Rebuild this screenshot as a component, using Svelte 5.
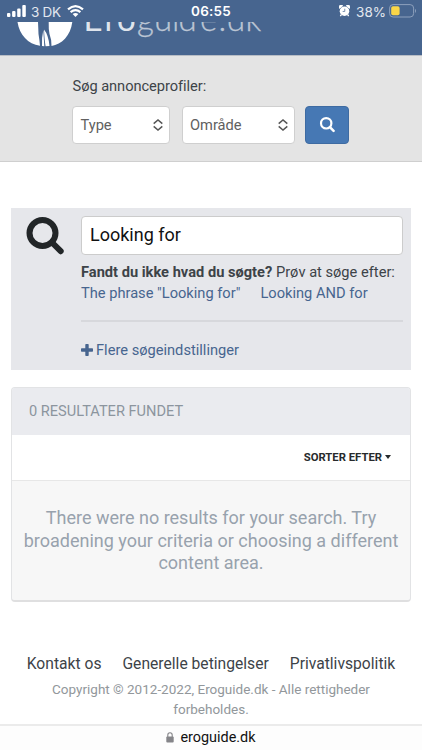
<script>
  const filters = [
    { label: 'Type', width: 98 },
    { label: 'Område', width: 113 }
  ];
  const footerLinks = ['Kontakt os', 'Generelle betingelser', 'Privatlivspolitik'];
</script>

<div class="page">
  <div class="status">
    <div class="left">
      <svg width="20" height="12" viewBox="0 0 20 12" fill="#fff">
        <rect x="0" y="8" width="3.4" height="4" rx="1" />
        <rect x="5.1" y="6" width="3.4" height="6" rx="1" />
        <rect x="10.2" y="3.5" width="3.4" height="8.5" rx="1" />
        <rect x="15.3" y="0" width="3.5" height="12" rx="1" />
      </svg>
      <span class="carrier">3 DK</span>
      <svg width="17" height="12" viewBox="0 0 17 12">
        <path d="M1 4.4Q8.5-2.1 16 4.4M3.6 7.2q4.9-4.1 9.8 0" fill="none" stroke="#fff" stroke-width="2.2" />
        <path d="M5.6 9.1q2.9-2.3 5.8 0L8.5 12z" fill="#fff" />
      </svg>
    </div>
    <span class="time">06:55</span>
    <div class="right">
      <svg width="11" height="12" viewBox="0 0 12 13">
        <path d="M0.5 3.6A2.2 2.2 0 0 1 4 .8zM11.500 3.600A2.200 2.200 0 0 0 8 .8z" fill="#fff" stroke="#fff" />
        <path d="M2.500 10.500l-1 1.500M9.500 10.500l1 1.500" stroke="#fff" stroke-width="1.500" />
        <circle cx="6" cy="6.700" r="5.200" fill="#fff" />
        <path d="M6.300 4v3H4" fill="none" stroke="#6f87a9" stroke-width="1" />
      </svg>
      <span class="percent">38%</span>
      <svg width="28" height="14" viewBox="0 0 28 14">
        <rect x=".6" y=".6" width="24" height="12.400" rx="3.500" fill="none" stroke="#8ea1bd" />
        <rect x="2.200" y="2.300" width="8.400" height="9" rx="1.800" fill="#fad648" />
        <path d="M26 4.700q2 2.100 0 4.200z" fill="#8ea1bd" />
      </svg>
    </div>
  </div>

  <header>
    <svg width="280" height="33" viewBox="0 22 280 33">
      <path d="M17.500 22H38Q38.300 28 38.500 34Q39.500 40 40 45.800C28 44 19.500 35 17.500 22z" fill="#fff" />
      <path d="M48.700 22H72.300C70.500 36 61.500 44.500 51.500 46Q51.500 39 49.500 34Q48.500 29 48.700 22z" fill="#fff" />
      <path d="M43.300 30Q41.500 38 42 46L44.300 46.300zM44 29.500Q44.500 40 45.600 46.300L49.500 46Q48.500 35 44 29.500z" fill="#fff" />
      <text x="83.500 104.500 117 137 154 172 178.500 200 218.500 227 245.500" y="31" class="logo">Ero<tspan class="thin">guide.dk</tspan></text>
    </svg>
  </header>

  <section class="finder">
    <div class="finder-label">Søg annonceprofiler:</div>
    <div class="controls">
      {#each filters as f}
        <div class="select" style="width: {f.width}px">
          <span>{f.label}</span>
          <svg width="10" height="12" viewBox="0 0 10 12" fill="none" stroke="#555" stroke-width="1.500">
            <path d="M.7 4.600L5 1l4.300 3.600M.7 7.400L5 11l4.300-3.600" />
          </svg>
        </div>
      {/each}
      <button aria-label="Søg">
        <svg width="16" height="16" viewBox="0 0 16 16" fill="none" stroke="#fff" stroke-width="2.200">
          <circle cx="7.200" cy="6.300" r="5.200" />
          <path d="M10.900 10.100l3.700 3.700" stroke-width="2.500" stroke-linecap="round" />
        </svg>
      </button>
    </div>
  </section>

  <section class="search">
    <svg width="40" height="40" viewBox="0 0 40 40" fill="none" stroke="#222628">
      <circle cx="17.500" cy="17" r="13" stroke-width="6" />
      <path d="M27 26.500l8.700 8.700" stroke-width="6" stroke-linecap="round" />
    </svg>
    <div class="fields">
      <div class="query">Looking for</div>
      <div class="hint"><b>Fandt du ikke hvad du søgte?</b> <span>Prøv at søge efter:</span></div>
      <div class="phrases"><span>The phrase "Looking for"</span><span>Looking AND for</span></div>
      <div class="rule"></div>
      <div class="more">
        <svg width="12" height="12" viewBox="0 0 12 12" fill="#47658f"><path d="M5 0h2q.7 0 .7.700v3.600h3.600q.7 0 .7.700v2q0 .7-.7.700H7.700v3.600q0 .7-.7.700H5q-.7 0-.7-.7V7.700H.7Q0 7.700 0 7V5q0-.7.700-.7h3.600V.7Q4.300 0 5 0z" /></svg>
        <span>Flere søgeindstillinger</span>
      </div>
    </div>
  </section>

  <section class="results">
    <div class="title"><span>0 RESULTATER FUNDET</span></div>
    <div class="sort"><span>SORTER EFTER</span><i></i></div>
    <div class="empty">There were no results for your search. Try<br />broadening your criteria or choosing a different<br />content area.</div>
  </section>

  <footer>
    <nav>
      {#each footerLinks as link}<span>{link}</span>{/each}
    </nav>
    <p>Copyright © 2012-2022, Eroguide.dk - Alle rettigheder<br />forbeholdes.</p>
  </footer>

  <div class="address">
    <svg width="8" height="11" viewBox="0 0 8 11">
      <path d="M1.800 5V3a2.200 2.200 0 0 1 4.400 0v2" fill="none" stroke="#858589" stroke-width="1.100" />
      <rect x=".3" y="4.500" width="7.400" height="6" rx="1" fill="#858589" />
    </svg>
    <span>eroguide.dk</span>
  </div>
</div>

<style>
  :global(body) { margin: 0; background: #fff; }
  .page {
    width: 422px; height: 750px; overflow: hidden; display: flex; flex-direction: column;
    font-family: Roboto, "Liberation Sans", sans-serif; font-size: 14.650px; color: #3d4348;
    background: #fff; white-space: nowrap;
  }
  svg { display: block; flex: none; }
  .status {
    height: 22px; background: #47658f; color: #fff; display: grid;
    grid-template-columns: 1fr auto 1fr; font-family: Inter, sans-serif; font-size: 13.500px; line-height: 20px;
  }
  .left, .right { display: flex; align-items: center; }
  .left { padding-left: 7px; }
  .carrier { margin: 2px 6px 0 4px; letter-spacing: -.3px; color: #e3e8ef; }
  .time { font-weight: 600; padding-top: 1px; letter-spacing: .2px; }
  .right { justify-content: flex-end; padding-right: 5px; }
  .percent { margin: 2px 3px 0 6px; color: #e3e8ef; }
  header { height: 33px; background: #47658f; }
  .logo { font-family: Lato, sans-serif; font-weight: 400; font-size: 33px; fill: #dfe4ec; }
  .thin { font-weight: 300; fill: #bcc5d4; stroke: #bcc5d4; stroke-width: .3px; }
  .finder {
    box-sizing: border-box; height: 107px; padding: 21px 0 0 72px; background: #e4e4e4;
    border-top: 1px solid #b8bdc5; border-bottom: 1px solid #cfcfcf;
  }
  .finder-label { height: 18px; line-height: 18px; padding-left: .5px; letter-spacing: -.05px; }
  .controls { display: flex; gap: 11.500px; margin-top: 11px; }
  .select {
    box-sizing: border-box; height: 38px; background: #fff; border: 1px solid #cfcfcf; border-radius: 4px;
    padding: 0 6px 0 7.500px; display: flex; align-items: center; justify-content: space-between; color: #606060;
  }
  button {
    box-sizing: border-box; width: 44px; height: 38px; margin-left: -1px; padding: 0; display: grid; place-items: center;
    background: #4678b4; border: 1px solid #3e6ba2; border-radius: 4px;
  }
  .search {
    margin: 46px 11px 0; height: 162px; background: #e6e7eb; display: flex; padding: 8px 8px 0 14px;
    box-sizing: border-box; flex: none;
  }
  .fields { flex: 1; margin-left: 16px; }
  .query {
    box-sizing: border-box; height: 39px; border: 1px solid #ccc; border-radius: 4px; background: #fff;
    color: #111; font-size: 18px; line-height: 36px; padding-left: 8px;
  }
  .hint { margin-top: 7px; line-height: 21px; height: 21px; }
  .phrases { height: 22px; line-height: 21px; display: flex; gap: 20px; color: #47658f; }
  .rule { height: 2px; background: #d7d8dc; margin-top: 15px; }
  .more { display: flex; align-items: center; gap: 3px; color: #47658f; height: 20px; margin-top: 18px; }
  .results {
    box-sizing: border-box; margin: 17px 11px 0; height: 215px; flex: none;
    border: 1px solid #e2e3e5; border-bottom: 2px solid #dfdfe0; border-radius: 4px; overflow: hidden;
    background: #f7f7f7;
  }
  .title { height: 47px; line-height: 46px; padding-left: 17px; background: #eaebef; color: #8c959e; font-size: 14.600px; }
  .sort {
    box-sizing: border-box; height: 46px; display: flex; align-items: center; justify-content: flex-end; padding: 0 19px 1px 0;
    background: #fff; border-bottom: 1px solid #e7e7e7; color: #272a2c; font-weight: 700; font-size: 11.300px;
  }
  .sort i { border: 3.500px solid transparent; border-top: 4px solid #272a2c; border-bottom: 0; margin-left: 3px; }
  .empty { padding-top: 26px; text-align: center; color: #98a2ad; font-size: 18px; line-height: 22.500px; }
  footer { box-sizing: border-box; padding-top: 52px; height: 122px; flex: none; text-align: center; }
  nav { display: flex; justify-content: center; gap: 21px; font-size: 15.650px; line-height: 20px; }
  p { margin: 5px 0 0; color: #92979b; font-size: 13.500px; line-height: 20px; }
  .address {
    border-top: 2px solid #ebebeb; height: 24px; display: flex; justify-content: center;
    gap: 6px; color: #111; font-size: 14.400px; line-height: 23px; background: #fdfdfd;
  }
  .address svg { margin-top: 6px; }
</style>
